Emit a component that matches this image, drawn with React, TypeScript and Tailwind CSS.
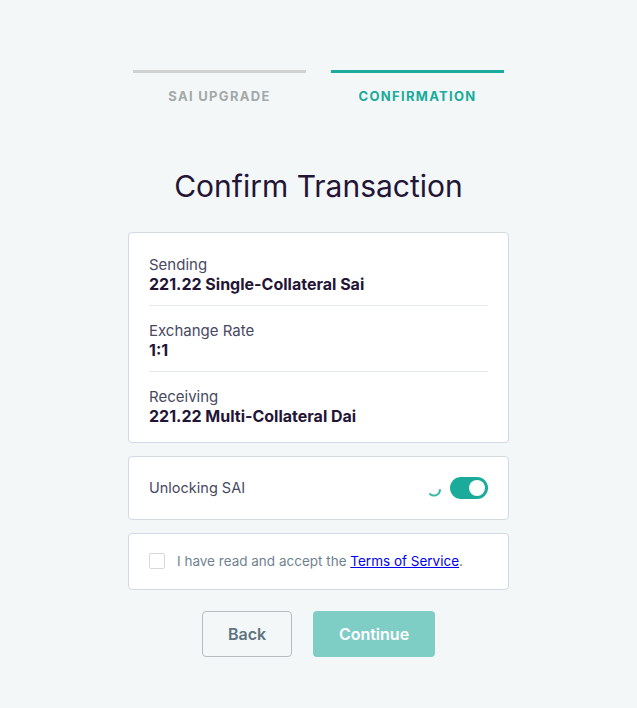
import React from "react";

const Row: React.FC<{ label: string; value: string; last?: boolean }> = ({ label, value, last }) => (
  <div className={`pt-[15px] pb-[12px] ${last ? "" : "border-b border-[#e6eaee]"}`}>
    <p className="text-[15px] leading-[20px] text-[#48495f]">{label}</p>
    <p className="text-[16px] leading-[18px] font-bold text-[#231536]">{value}</p>
  </div>
);

export default function App() {
  return (
    <div className="min-h-[708px] w-full bg-[#f4f7f8] font-['Inter',sans-serif] pt-[70px]">
      <div className="mx-auto w-[371px] grid grid-cols-2 gap-[25px]">
        <div className="flex flex-col items-center">
          <div className="h-[3px] w-full bg-[#cfd1d1]" />
          <p className="mt-[14px] text-[13px] font-bold tracking-[0.1em] text-[#a3a8a8]">SAI UPGRADE</p>
        </div>
        <div className="flex flex-col items-center">
          <div className="h-[3px] w-full bg-[#1aab9b]" />
          <p className="mt-[14px] text-[13px] font-bold tracking-[0.1em] text-[#1aab9b]">CONFIRMATION</p>
        </div>
      </div>

      <h1 className="mt-[61px] text-center text-[30px] leading-[36px] text-[#231536]">Confirm Transaction</h1>

      <div className="mx-auto mt-[28px] w-[381px] flex flex-col gap-[13px]">
        <div className="rounded-[4px] border border-[#d4d9e1] bg-white px-[20px] pt-[7px] pb-[5px]">
          <Row label="Sending" value="221.22 Single-Collateral Sai" />
          <Row label="Exchange Rate" value="1:1" />
          <Row label="Receiving" value="221.22 Multi-Collateral Dai" last />
        </div>

        <div className="h-[64px] rounded-[4px] border border-[#d4d9e1] bg-white px-[20px] flex items-center justify-between">
          <span className="text-[14.5px] text-[#48495f]">Unlocking SAI</span>
          <div className="flex items-center gap-[8px]">
            <svg width="16" height="16" viewBox="0 0 16 16" className="mt-[2px]">
              <path d="M14 9 A6 6 0 0 1 4 13" fill="none" stroke="#1aab9b" strokeWidth="2" strokeLinecap="round" opacity="0.85" />
            </svg>
            <div className="w-[38px] h-[22px] rounded-full bg-[#1aab9b] flex items-center justify-end px-[3px]">
              <div className="w-[16px] h-[16px] rounded-full bg-white" />
            </div>
          </div>
        </div>

        <div className="h-[57px] rounded-[4px] border border-[#d4d9e1] bg-white px-[20px] flex items-center gap-[12px]">
          <div className="w-[16px] h-[16px] rounded-[2px] border border-[#d4d9e1] bg-white" />
          <span className="text-[13.5px] text-[#708390]">
            I have read and accept the{" "}
            <a href="#" className="text-[#0000ee] underline">Terms of Service</a>.
          </span>
        </div>
      </div>

      <div className="mt-[21px] flex justify-center gap-[21px]">
        <button className="w-[90px] h-[46px] rounded-[4px] border border-[#b6bcc2] text-[16px] font-semibold text-[#5f7480]">Back</button>
        <button className="w-[122px] h-[46px] rounded-[4px] bg-[#7fcec6] text-[16px] font-semibold text-white">Continue</button>
      </div>
    </div>
  );
}
